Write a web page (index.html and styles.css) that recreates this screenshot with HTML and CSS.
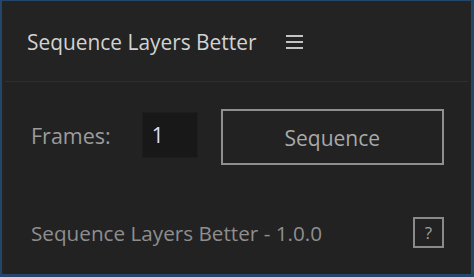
FILE: index.html
```html
<!DOCTYPE html>
<html lang="en">
<head>
  <meta charset="UTF-8" />
  <title>Sequence Layers Better</title>
  <link rel="stylesheet" href="styles.css">
</head>
<body>

<div class="frame">
  <header class="panel-head">
    <h1 class="panel-title">Sequence Layers Better</h1>
    <span class="menu-icon">
      <svg width="17" height="14" viewBox="0 0 17 14">
        <rect x="0" y="0" width="17" height="2" fill="#c4c4c4"/>
        <rect x="0" y="6" width="17" height="2" fill="#c4c4c4"/>
        <rect x="0" y="12" width="17" height="2" fill="#c4c4c4"/>
      </svg>
    </span>
  </header>

  <div class="panel">
    <div class="controls">
      <label class="frames-label" for="frames">Frames:</label>
      <div class="frames-input" id="frames">1</div>
      <button class="seq-btn">Sequence</button>
    </div>

    <div class="footer-row">
      <span class="version">Sequence Layers Better - 1.0.0</span>
      <button class="help-btn">?</button>
    </div>
  </div>
</div>

</body>
</html>
```
FILE: styles.css
```css
html, body {
  margin: 0;
  padding: 0;
  background: #23476e;
}

body {
  width: 474px;
  height: 277px;
  font-family: 'Open Sans', sans-serif;
}

.frame {
  box-sizing: border-box;
  width: 474px;
  height: 277px;
  border-left: 2px solid #24466b;
  border-right: 3px solid #24466b;
  border-top: 1px solid #24466b;
  border-bottom: 3px solid #24466b;
  background: #232323;
  display: flex;
  flex-direction: column;
}

.panel-head {
  height: 80px;
  display: flex;
  align-items: center;
  padding-left: 25px;
  gap: 29px;
}

.panel-title {
  margin: 2px 0 0 0;
  font-size: 20.9px;
  font-weight: 400;
  color: #d2d2d2;
}

.menu-icon {
  display: flex;
  padding-top: 2px;
}

.panel {
  flex: 1;
  margin: 0 3px 0 3px;
  border-top: 1px solid #2f2f2f;
  background: #222222;
  display: flex;
  flex-direction: column;
  padding: 27px 24px 0 26px;
}

.controls {
  display: flex;
  align-items: center;
}

.frames-label {
  font-size: 21.5px;
  color: #9c9c9c;
  width: 111px;
  margin-bottom: 3px;
}

.frames-input {
  box-sizing: border-box;
  width: 56px;
  height: 46px;
  margin-bottom: 5px;
  background: #181818;
  border: 1px solid #1d1d1d;
  border-radius: 2px;
  color: #dcdcff;
  font-size: 21px;
  padding-left: 9px;
  display: flex;
  align-items: center;
}

.seq-btn {
  box-sizing: border-box;
  margin-left: 23px;
  width: 224px;
  height: 56px;
  background: transparent;
  border: 2px solid #8f8f8f;
  color: #a9a9a9;
  font-family: 'Open Sans', sans-serif;
  font-size: 21px;
  padding: 2px 0 0 0;
}

.footer-row {
  display: flex;
  align-items: center;
  justify-content: space-between;
  margin-top: 52px;
}

.version {
  font-size: 20.7px;
  color: #8e8e8e;
}

.help-btn {
  box-sizing: border-box;
  width: 31px;
  height: 31px;
  background: transparent;
  border: 2px solid #8a8a8a;
  color: #a0a0a0;
  font-family: 'Open Sans', sans-serif;
  font-size: 17px;
  padding: 0;
}
```
